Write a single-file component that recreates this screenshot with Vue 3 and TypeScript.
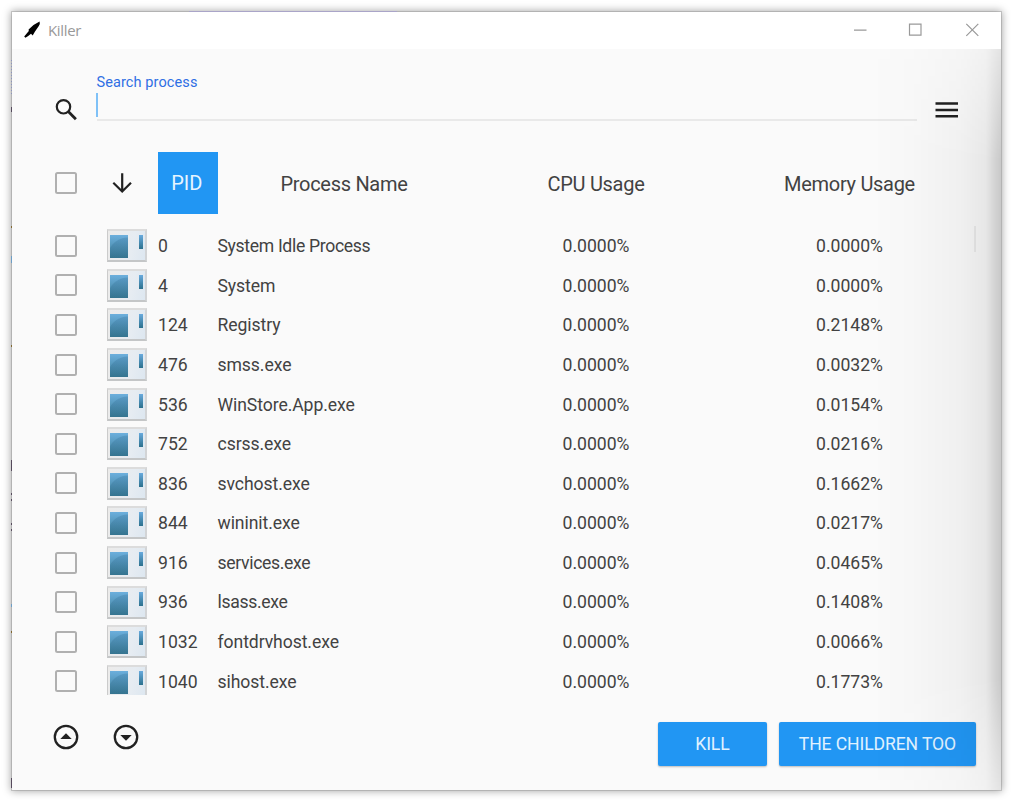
<script setup lang="ts">
import { ref } from 'vue'

interface ProcessRow {
  pid: number
  name: string
  cpu: string
  memory: string
  tight?: boolean
}

const search = ref('')

const processes: ProcessRow[] = [
  { pid: 0, name: 'System Idle Process', cpu: '0.0000%', memory: '0.0000%', tight: true },
  { pid: 4, name: 'System', cpu: '0.0000%', memory: '0.0000%' },
  { pid: 124, name: 'Registry', cpu: '0.0000%', memory: '0.2148%' },
  { pid: 476, name: 'smss.exe', cpu: '0.0000%', memory: '0.0032%' },
  { pid: 536, name: 'WinStore.App.exe', cpu: '0.0000%', memory: '0.0154%' },
  { pid: 752, name: 'csrss.exe', cpu: '0.0000%', memory: '0.0216%' },
  { pid: 836, name: 'svchost.exe', cpu: '0.0000%', memory: '0.1662%' },
  { pid: 844, name: 'wininit.exe', cpu: '0.0000%', memory: '0.0217%' },
  { pid: 916, name: 'services.exe', cpu: '0.0000%', memory: '0.0465%', tight: true },
  { pid: 936, name: 'lsass.exe', cpu: '0.0000%', memory: '0.1408%', tight: true },
  { pid: 1032, name: 'fontdrvhost.exe', cpu: '0.0000%', memory: '0.0066%' },
  { pid: 1040, name: 'sihost.exe', cpu: '0.0000%', memory: '0.1773%' },
]
</script>

<template>
  <div class="desktop">
    <div class="window">
      <header class="titlebar">
        <svg class="knife" width="18" height="18" viewBox="0 0 18 18">
          <path d="M16.6 .4 Q17.4 2.6 15.8 5 L12 10.6 L9.7 14.6 L8 12.8 L5.2 14.9 L2.4 16.8 L1.2 15.4 L5.8 10 L5.6 8.4 Q10.3 3.2 16.6 .4Z" fill="#000" />
        </svg>
        <span class="title">Killer</span>
        <svg class="controls" width="130" height="16" viewBox="0 0 130 16" fill="none" stroke="#999" stroke-width="1.2">
          <path d="M2 9.2H14.5M57.5 3.2H69V14.2H57.5ZM114.3 2.9L126.3 14.9M126.3 2.9L114.3 14.9" />
        </svg>
      </header>

      <div class="content">
        <div class="toolbar">
          <svg class="magnifier" width="24" height="24" viewBox="0 0 24 24" fill="none" stroke="#212121">
            <circle cx="8.5" cy="8.8" r="6.7" stroke-width="2.2" />
            <path d="M13.3 13.6L20.9 21.2" stroke-width="2.8" />
          </svg>
          <label class="field">
            <span class="label">Search process</span>
            <span class="entry"><i class="caret"></i>{{ search }}</span>
          </label>
          <svg class="menu" width="24" height="18" viewBox="0 0 24 18">
            <path d="M.5 1.6H23M.5 7.9H23M.5 14.2H23" stroke="#212121" stroke-width="2.5" />
          </svg>
        </div>

        <div class="grid head">
          <span class="check"></span>
          <svg class="sort" width="24" height="24" viewBox="0 0 24 24" fill="none" stroke="#212121" stroke-width="2.2">
            <path d="M12.2 2.3V20.5M3.3 11.7L12.2 20.5L21 11.7" />
          </svg>
          <span class="pid-head">PID</span>
          <span class="heading name-head">Process Name</span>
          <span class="heading cpu">CPU Usage</span>
          <span class="heading memory">Memory Usage</span>
        </div>

        <div class="list">
          <div v-for="p in processes" :key="p.pid" class="grid row">
            <span class="check"></span>
            <span class="app-icon"><i class="pane"></i><i class="strip"></i></span>
            <span>{{ p.pid }}</span>
            <span class="name" :class="{ tight: p.tight }">{{ p.name }}</span>
            <span class="cpu">{{ p.cpu }}</span>
            <span class="memory">{{ p.memory }}</span>
          </div>
          <i class="scrollbar"></i>
        </div>

        <footer class="footer">
          <svg class="circle" width="26" height="26" viewBox="0 0 26 26">
            <circle cx="13" cy="13" r="11.2" fill="none" stroke="#212121" stroke-width="2.3" />
            <path d="M7.3 15L13 9.3L18.7 15Z" fill="#212121" />
          </svg>
          <svg class="circle second" width="26" height="26" viewBox="0 0 26 26">
            <circle cx="13" cy="13" r="11.2" fill="none" stroke="#212121" stroke-width="2.3" />
            <path d="M7.3 11L13 16.7L18.7 11Z" fill="#212121" />
          </svg>
          <button class="kill">KILL</button>
          <button class="children">THE CHILDREN TOO</button>
        </footer>
        <div class="shade"></div>
      </div>
      <i class="top-glint"></i>
      <svg class="edge" width="2" height="778" viewBox="0 0 2 778">
        <path d="M.5 48V82" stroke="#8b94bd" stroke-dasharray="1 2" />
        <path d="M.5 95V100M.5 448V459M.5 481V483M.5 487V489M.5 511V513M.5 517V519M.5 766V776" stroke="#554a5c" />
        <path d="M.5 214V216M.5 333V335M.5 619V621" stroke="#80662d" />
        <path d="M.5 244V251M.5 592V595" stroke="#6c9dc5" />
      </svg>
    </div>
  </div>
</template>

<style>
body {
  margin: 0;
  background: #fff;
}
</style>

<style scoped>
.desktop {
  box-sizing: border-box;
  width: 1011px;
  height: 800px;
  padding: 12px 10px 10px 12px;
  overflow: hidden;
  font-family: Roboto, sans-serif;
  color: #424242;
}
.window {
  position: relative;
  width: 989px;
  height: 778px;
  background: #fafafa;
  box-shadow: 0 0 0 1px rgba(120, 120, 120, 0.3), 0 0 8px 1px rgba(0, 0, 0, 0.36);
}
.titlebar {
  display: flex;
  align-items: flex-start;
  box-sizing: border-box;
  height: 37px;
  padding-top: 9px;
  background: #fff;
}
.knife {
  margin-left: 11px;
}
.title {
  margin-left: 7px;
  font: 15px/18px "Open Sans", sans-serif;
  letter-spacing: -0.35px;
  color: #999;
}
.controls {
  margin-left: auto;
  margin-right: 19px;
}
.content {
  position: relative;
  height: 741px;
}
.toolbar {
  display: flex;
  height: 103px;
}
.magnifier {
  margin: 49px 0 0 43px;
}
.field {
  display: flex;
  flex-direction: column;
  width: 820px;
  margin-left: 17.5px;
  padding-top: 24px;
}
.label {
  height: 20px;
  font-size: 14.5px;
  line-height: 20px;
  letter-spacing: 0.1px;
  color: #2f6fe4;
}
.entry {
  display: flex;
  height: 26px;
  border-bottom: 2px solid #e9e9e9;
}
.caret {
  width: 2px;
  height: 24px;
  margin-left: -0.5px;
  background: #7fc1f7;
}
.menu {
  margin: 53px 0 0 18.5px;
}
.grid {
  display: grid;
  grid-template-columns: 52px 50.5px 59.5px 253px 251px 256px;
  align-items: center;
  margin-left: 43.5px;
}
.head {
  height: 62px;
  grid-template-rows: 62px;
  font-size: 20px;
  letter-spacing: -0.3px;
}
.heading {
  padding-top: 1px;
}
.check {
  box-sizing: border-box;
  width: 22px;
  height: 22px;
  margin-left: -0.1px;
  border: 2px solid #b0b0b0;
  border-radius: 2.5px;
}
.sort {
  margin-left: 2.5px;
}
.pid-head {
  align-self: stretch;
  width: 59.5px;
  padding-right: 2px;
  box-sizing: border-box;
  line-height: 62px;
  letter-spacing: 0;
  text-align: center;
  color: #e6f4ff;
  background: #2196f3;
}
.name-head,
.cpu,
.memory {
  text-align: center;
}
.list {
  position: relative;
  height: 481px;
  padding-top: 12px;
  box-sizing: border-box;
  overflow: hidden;
}
.row {
  height: 39.6px;
  font-size: 17.6px;
}
.row > span:nth-child(n + 3) {
  padding-top: 0.7px;
}
.name {
  letter-spacing: -0.08px;
}
.name.tight {
  letter-spacing: -0.33px;
}
.app-icon {
  position: relative;
  box-sizing: border-box;
  width: 40px;
  height: 33px;
  margin-left: -0.4px;
  border: 1px solid #cbcbcb;
  border-bottom: 2px solid #c4c6c7;
  border-top: 2px solid #dcdcdc;
  border-right: 2px solid #d2d4d6;
  background: linear-gradient(100deg, #ecebea, #e6ecf2 65%, #dde7f0);
}
.pane {
  position: absolute;
  left: 1.5px;
  top: 4px;
  width: 18px;
  height: 23px;
  background: radial-gradient(circle at 100% 100%, rgba(30, 85, 125, 0.2) 0 20px, transparent 21px), linear-gradient(#6cafdd, #3b7c94);
}
.strip {
  position: absolute;
  right: 2px;
  top: 4px;
  width: 4px;
  height: 14px;
  background: linear-gradient(#68aadd, #2c718d);
}
.scrollbar {
  position: absolute;
  left: 962px;
  top: 12px;
  width: 2px;
  height: 26px;
  background: #ebebeb;
}
.footer {
  display: flex;
  align-items: flex-start;
  padding: 27px 24.6px 0 41.4px;
}
.circle {
  margin-top: 2px;
}
.second {
  margin-left: 33.5px;
}
button {
  height: 44px;
  padding: 0 1px 0 0;
  border: 0;
  border-radius: 2px;
  font: 17.6px/42px Roboto, sans-serif;
  letter-spacing: -0.12px;
  color: #e0f2ff;
  background: #2196f3;
  box-shadow: 0 1px 2px rgba(0, 0, 0, 0.25);
}
.kill {
  width: 109px;
  margin-left: auto;
}
.children {
  width: 197px;
  margin-left: 12px;
}
.shade {
  position: absolute;
  inset: 0 0 0 auto;
  width: 130px;
  pointer-events: none;
  background: linear-gradient(90deg, transparent, rgba(0, 0, 0, 0.012) 30%, rgba(0, 0, 0, 0.04) 68%, rgba(0, 0, 0, 0.075) 88%, rgba(0, 0, 0, 0.2));
  mask-image: linear-gradient(rgba(0, 0, 0, 0.45), #000 15%, #000 85%, rgba(0, 0, 0, 0.45));
}
.top-glint {
  position: absolute;
  left: 177px;
  top: -1px;
  width: 208px;
  height: 1px;
  background: #aaa5c8;
}
.edge {
  position: absolute;
  left: -1px;
  top: 0;
}
</style>
